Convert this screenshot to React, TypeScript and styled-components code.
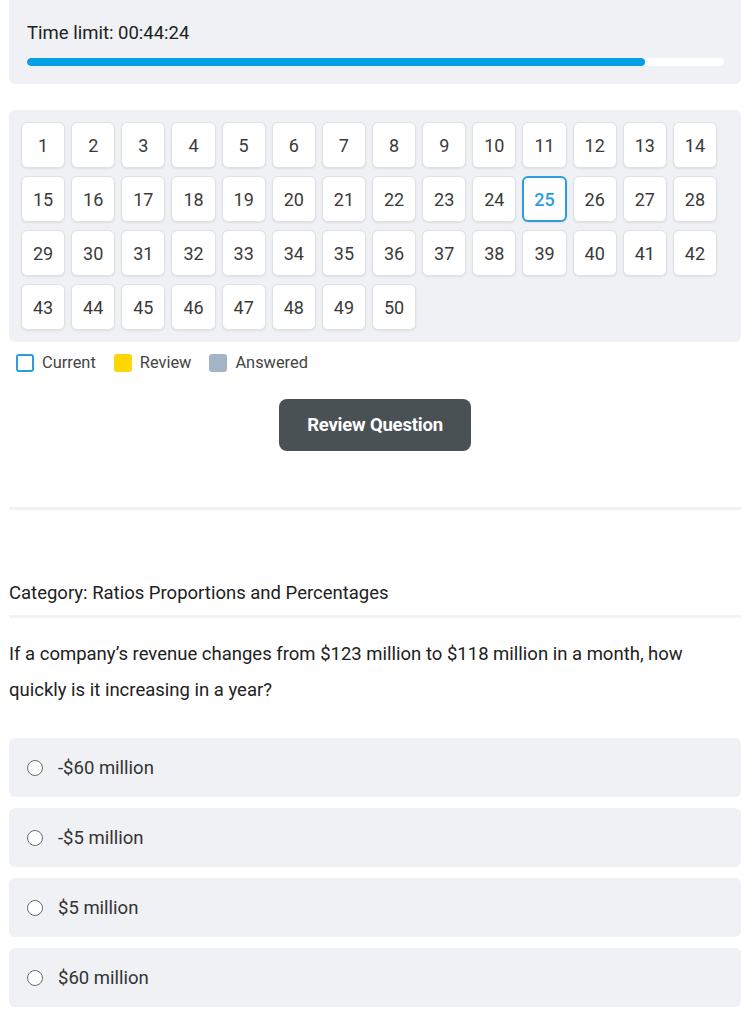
import styled, { createGlobalStyle } from "styled-components";

const GlobalStyle = createGlobalStyle`
  body {
    margin: 0;
    background: #ffffff;
    font-family: Roboto, "Liberation Sans", sans-serif;
    color: #212121;
  }
`;

const Page = styled.div`
  width: 732px;
  margin-left: 9px;
  display: flex;
  flex-direction: column;
`;

const TimerCard = styled.div`
  background: #eff1f4;
  border-radius: 0 0 6px 6px;
  padding: 22px 17px 18px 18px;
  display: flex;
  flex-direction: column;
  gap: 14px;
`;

const TimerText = styled.div`
  font-size: 18.5px;
  line-height: 22px;
`;

const Track = styled.div`
  height: 8px;
  background: #ffffff;
  border-radius: 4px;
  overflow: hidden;
`;

const Fill = styled.div`
  height: 100%;
  background: #049fe4;
  border-radius: 4px;
`;

const GridPanel = styled.div`
  margin-top: 26px;
  background: #eff1f4;
  border-radius: 6px;
  padding: 12px 24px 12px 12px;
  display: grid;
  grid-template-columns: repeat(14, 1fr);
  column-gap: 6px;
  row-gap: 8px;
`;

const NumButton = styled.div<{ $current?: boolean }>`
  height: 46px;
  box-sizing: border-box;
  background: #ffffff;
  border: ${(p) => (p.$current ? "2px solid #2a9de0" : "1px solid #dfe1e4")};
  border-radius: 6px;
  box-shadow: 0 1px 2px rgba(0, 0, 0, 0.08);
  display: flex;
  align-items: center;
  justify-content: center;
  font-size: 18px;
  color: ${(p) => (p.$current ? "#2a9de0" : "#3a3a3a")};
  font-weight: ${(p) => (p.$current ? 500 : 400)};
`;

const Legend = styled.div`
  display: flex;
  align-items: center;
  margin-top: 11px;
  padding-left: 7px;
  gap: 18px;
`;

const LegendItem = styled.div`
  display: flex;
  align-items: center;
  gap: 8px;
  font-size: 16.4px;
  color: #444;
`;

const Swatch = styled.span<{ $kind: "current" | "review" | "answered" }>`
  width: 18px;
  height: 18px;
  box-sizing: border-box;
  border-radius: 3px;
  background: ${(p) =>
    p.$kind === "review" ? "#ffd600" : p.$kind === "answered" ? "#a3b4c6" : "#ffffff"};
  border: ${(p) => (p.$kind === "current" ? "2px solid #2a9de0" : "none")};
`;

const ReviewButton = styled.button`
  align-self: center;
  margin-top: 27px;
  width: 192px;
  height: 52px;
  border: none;
  border-radius: 8px;
  background: #4a5154;
  color: #ffffff;
  font-family: Roboto, "Liberation Sans", sans-serif;
  font-size: 18.5px;
  font-weight: 700;
  letter-spacing: -0.2px;
`;

const Divider = styled.hr<{ $top: number }>`
  margin: ${(p) => p.$top}px 0 0;
  border: none;
  height: 3px;
  background: #f1f2f4;
`;

const Category = styled.div`
  margin-top: 72px;
  font-size: 18.5px;
  line-height: 22px;
`;

const Question = styled.p`
  margin: 18px 0 0;
  font-size: 18.5px;
  line-height: 36px;
`;

const Options = styled.div`
  margin-top: 30px;
  display: flex;
  flex-direction: column;
  gap: 11px;
`;

const Option = styled.label`
  height: 59px;
  background: #eff1f4;
  border-radius: 6px;
  display: flex;
  align-items: center;
  padding-left: 18px;
  gap: 15px;
  font-size: 18.5px;
  color: #333;
`;

const Radio = styled.span`
  width: 16px;
  height: 16px;
  box-sizing: border-box;
  border-radius: 50%;
  border: 1.5px solid #6b6b6b;
  background: #ffffff;
`;

const answers = ["-$60 million", "-$5 million", "$5 million", "$60 million"];

export default function App() {
  const nums = Array.from({ length: 50 }, (_, i) => i + 1);
  const progress = 88.7; // remaining share of the time limit

  return (
    <>
      <GlobalStyle />
      <Page>
        <TimerCard>
          <TimerText>Time limit: 00:44:24</TimerText>
          <Track>
            <Fill style={{ width: `${progress}%` }} />
          </Track>
        </TimerCard>

        {/* question picker */}
        <GridPanel>
          {nums.map((n) => (
            <NumButton key={n} $current={n === 25}>
              {n}
            </NumButton>
          ))}
        </GridPanel>

        <Legend>
          <LegendItem>
            <Swatch $kind="current" />
            Current
          </LegendItem>
          <LegendItem>
            <Swatch $kind="review" />
            Review
          </LegendItem>
          <LegendItem>
            <Swatch $kind="answered" />
            Answered
          </LegendItem>
        </Legend>

        <ReviewButton>Review Question</ReviewButton>

        <Divider $top={56} />

        <Category>Category: Ratios Proportions and Percentages</Category>
        <Divider $top={11} />

        <Question>
          If a company’s revenue changes from $123 million to $118 million in a month, how
          quickly is it increasing in a year?
        </Question>

        <Options>
          {answers.map((a) => (
            <Option key={a}>
              <Radio />
              {a}
            </Option>
          ))}
        </Options>
      </Page>
    </>
  );
}
